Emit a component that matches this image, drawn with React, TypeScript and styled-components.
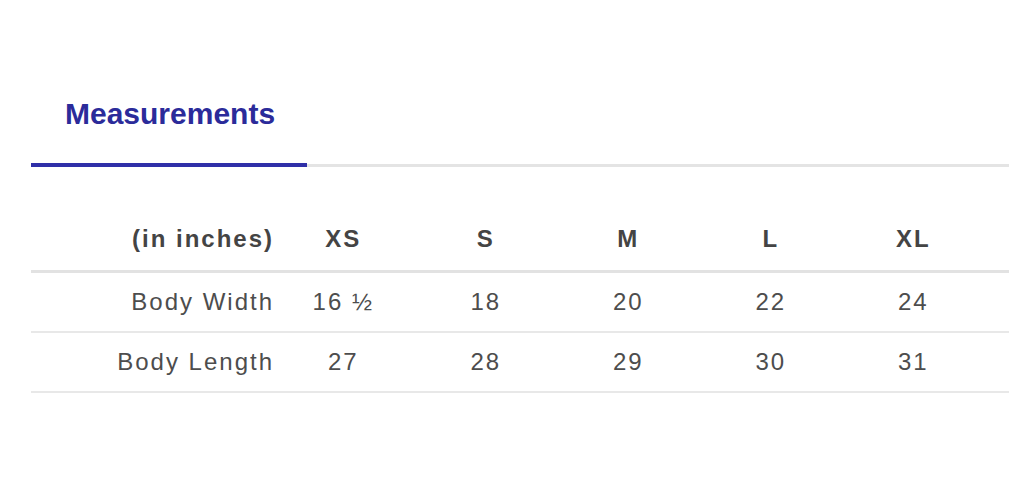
import React from 'react';
import styled, { createGlobalStyle } from 'styled-components';

const sizes = ['XS', 'S', 'M', 'L', 'XL'];

const rows = [
  { label: 'Body Width', values: ['16 ½', '18', '20', '22', '24'] },
  { label: 'Body Length', values: ['27', '28', '29', '30', '31'] },
];

const App = () => {
  return (
    <>
      <GlobalStyle />
      <Page>
        <TabBar>
          <Tab>Measurements</Tab>
        </TabBar>
        <Table>
          <HeadRow>
            <LabelCell $head>(in inches)</LabelCell>
            {sizes.map((size) => (
              <Cell key={size} $head>
                {size}
              </Cell>
            ))}
          </HeadRow>
          {rows.map((row) => (
            <Row key={row.label}>
              <LabelCell>{row.label}</LabelCell>
              {row.values.map((value, i) => (
                <Cell key={i}>{value}</Cell>
              ))}
            </Row>
          ))}
        </Table>
      </Page>
    </>
  );
};

export default App;

const GlobalStyle = createGlobalStyle`
  body {
    margin: 0;
    background: #fff;
    font-family: 'Liberation Sans', Arial, sans-serif;
  }
`;

const Page = styled.div`
  padding: 80px 0 0 31px;
  overflow: hidden;
`;

const TabBar = styled.div`
  display: flex;
  border-bottom: 3px solid #e4e4e4;
`;

const Tab = styled.div`
  width: 276px;
  box-sizing: border-box;
  padding: 17px 34px 32px;
  margin-bottom: -3px;
  border-bottom: 4px solid #2f2fa8;
  font-size: 30px;
  line-height: 34px;
  font-weight: 700;
  color: #2b2b9a;
  white-space: nowrap;
`;

const Table = styled.div`
  margin-top: 40px;
`;

const Row = styled.div`
  display: grid;
  grid-template-columns: 241px repeat(5, 142.5px);
  align-items: center;
  height: 58px;
  border-bottom: 2px solid #e8e8e8;
`;

const HeadRow = styled(Row)`
  height: 63px;
  border-bottom: 3px solid #e2e2e2;
`;

const Cell = styled.div<{ $head?: boolean }>`
  text-align: center;
  font-size: 24px;
  line-height: 26px;
  letter-spacing: 2px;
  font-weight: ${(p) => (p.$head ? 700 : 400)};
  color: ${(p) => (p.$head ? '#444' : '#4d4d4d')};
  white-space: nowrap;
`;

const LabelCell = styled(Cell)`
  text-align: right;
  margin-right: -2px;
`;
